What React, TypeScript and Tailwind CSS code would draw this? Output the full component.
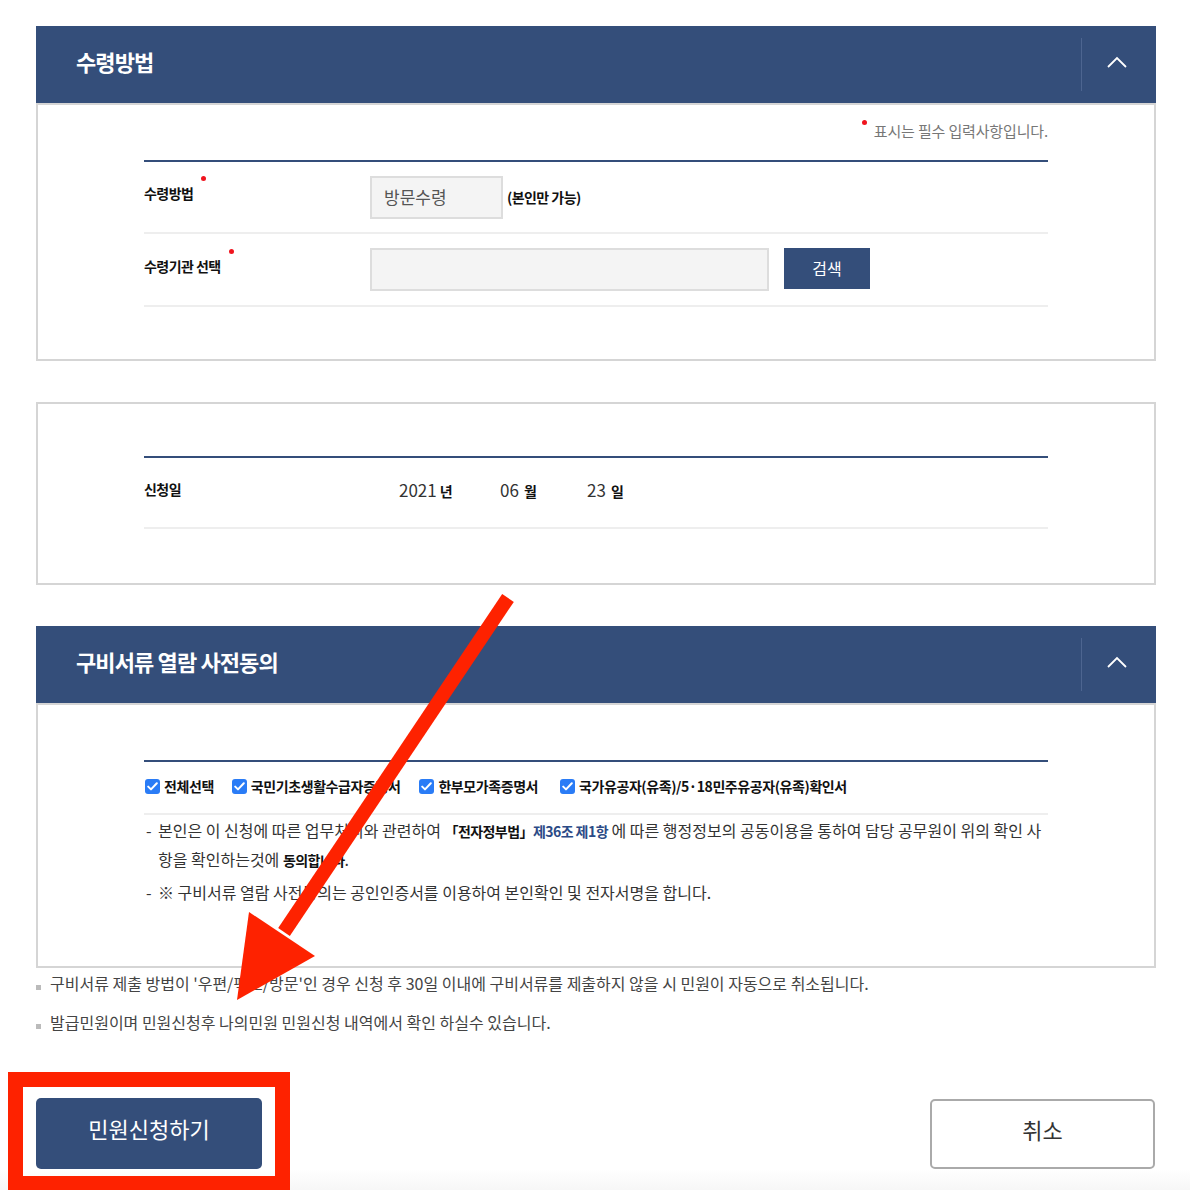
import React from "react";

const NAVY = "bg-[#344e7a]";

const Dot = () => (
  <span className="inline-block w-[5px] h-[5px] rounded-full bg-[#f0141e] mt-[-7px] ml-[8px] shrink-0" />
);

const SectionHeader: React.FC<{ title: string }> = ({ title }) => (
  <div className={`h-[77px] ${NAVY} flex items-center justify-between`}>
    <h2 className="pl-[40px] pb-[6px] text-[22px] font-bold text-white tracking-[-0.04em]">{title}</h2>
    <div className="w-[75px] h-[53px] border-l border-[#4d6590] flex items-center justify-center pr-[4px] pb-[6px]">
      <svg width="20" height="12" viewBox="0 0 20 12" fill="none">
        <path d="M1 11 L10 2 L19 11" stroke="#fff" strokeWidth="1.8" />
      </svg>
    </div>
  </div>
);

const Label: React.FC<{ text: string; required?: boolean }> = ({ text, required }) => (
  <div className="w-[226px] flex items-start text-[14px] font-bold text-[#111] tracking-[-0.04em] leading-[20px] pb-[8px]">
    {text}
    {required && <Dot />}
  </div>
);

const Check: React.FC<{ label: string }> = ({ label }) => (
  <label className="flex items-center gap-[4px]">
    <span className="w-[15px] h-[15px] rounded-[3px] bg-[#2a7cf6] flex items-center justify-center">
      <svg width="11" height="9" viewBox="0 0 11 9" fill="none">
        <path d="M1.2 4.6 L4 7.4 L9.8 1.2" stroke="#fff" strokeWidth="2" strokeLinecap="round" strokeLinejoin="round" />
      </svg>
    </span>
    <span className="text-[14px] font-bold text-[#111] tracking-[-0.03em]">{label}</span>
  </label>
);

export default function App() {
  return (
    <div className="relative w-[1190px] h-[1190px] overflow-hidden bg-white font-['Noto_Sans_CJK_KR',sans-serif]">
      <div className="ml-[36px] w-[1120px] pt-[26px]">
        {/* 수령방법 */}
        <SectionHeader title="수령방법" />
        <div className="border-2 border-[#d5d5d5] px-[106px] pt-[16px] pb-[52px]">
          <div className="flex justify-end items-start mb-[19px]">
            <span className="inline-block w-[5px] h-[5px] rounded-full bg-[#f0141e] mr-[7px] mt-[-1px]" />
            <span className="text-[15px] leading-[20px] text-[#777] tracking-[-0.01em]">표시는 필수 입력사항입니다.</span>
          </div>
          <div className="border-t-2 border-[#344e7a]">
            <div className="h-[72px] flex items-center border-b-2 border-[#eeeeee]">
              <Label text="수령방법" required />
              <div className="w-[133px] h-[43px] border-2 border-[#dddddd] bg-[#f4f4f4] flex items-center pl-[12px] text-[17px] text-[#555]">
                방문수령
              </div>
              <span className="ml-[4px] text-[14px] font-bold text-[#111] tracking-[-0.04em]">(본인만 가능)</span>
            </div>
            <div className="h-[73px] flex items-center border-b-2 border-[#eeeeee]">
              <Label text="수령기관 선택" required />
              <div className="w-[399px] h-[43px] border-2 border-[#dddddd] bg-[#f4f4f4]" />
              <button className={`ml-[15px] w-[86px] h-[41px] mb-[2px] pb-[2px] ${NAVY} text-white text-[16px]`}>검색</button>
            </div>
          </div>
        </div>

        {/* 신청일 */}
        <div className="mt-[41px] border-2 border-[#d5d5d5] px-[106px] pt-[52px] pb-[54px]">
          <div className="border-t-2 border-[#344e7a]">
            <div className="h-[71px] flex items-center pb-[6px] border-b-2 border-[#eeeeee]">
              <div className="w-[226px] text-[14px] font-bold text-[#111] tracking-[-0.04em]">신청일</div>
              <div className="flex items-center pl-[29px] text-[#333]">
                <span className="w-[101px]">
                  <span className="text-[17px]">2021</span>
                  <span className="ml-[3px] text-[14px] font-bold text-[#111]">년</span>
                </span>
                <span className="w-[87px]">
                  <span className="text-[17px]">06</span>
                  <span className="ml-[5px] text-[14px] font-bold text-[#111]">월</span>
                </span>
                <span>
                  <span className="text-[17px]">23</span>
                  <span className="ml-[5px] text-[14px] font-bold text-[#111]">일</span>
                </span>
              </div>
            </div>
          </div>
        </div>

        {/* 구비서류 열람 사전동의 */}
        <div className="mt-[41px]">
          <SectionHeader title="구비서류 열람 사전동의" />
          <div className="border-2 border-[#d5d5d5] px-[106px] pt-[55px] pb-[60px]">
            <div className="border-t-2 border-[#344e7a]">
              <div className="h-[53px] flex items-center pl-[1px] pb-[3px] border-b-2 border-[#eeeeee]">
                <Check label="전체선택" />
                <span className="w-[18px]" />
                <Check label="국민기초생활수급자증명서" />
                <span className="w-[19px]" />
                <Check label="한부모가족증명서" />
                <span className="w-[22px]" />
                <Check label="국가유공자(유족)/5·18민주유공자(유족)확인서" />
              </div>
              <div className="pt-[1px] text-[16px] leading-[28px] text-[#333]">
                <div className="flex">
                  <span className="w-[14px] shrink-0 pl-[2px]">-</span>
                  <p>
                    본인은 이 신청에 따른 업무처리와 관련하여 <b className="text-[14px] text-[#111] tracking-[-0.04em]">「전자정부법」</b>
                    <b className="text-[14px] text-[#2b4a86] tracking-[-0.04em]">제36조 제1항</b> 에 따른 행정정보의 공동이용을 통하여 담당 공무원이 위의 확인 사항을 확인하는것에{" "}
                    <b className="text-[14px] text-[#111] tracking-[-0.04em]">동의합니다</b>.
                  </p>
                </div>
                <div className="flex mt-[4px]">
                  <span className="w-[14px] shrink-0 pl-[2px]">-</span>
                  <p>※ 구비서류 열람 사전동의는 공인인증서를 이용하여 본인확인 및 전자서명을 합니다.</p>
                </div>
              </div>
            </div>
          </div>
        </div>

        {/* 안내 */}
        <ul className="mt-[5px] text-[16px] leading-[20px] text-[#444]">
          <li className="flex items-center gap-[9px]">
            <span className="w-[5px] h-[5px] bg-[#bbbbbb] mt-[8px]" />
            구비서류 제출 방법이 '우편/팩스/방문'인 경우 신청 후 30일 이내에 구비서류를 제출하지 않을 시 민원이 자동으로 취소됩니다.
          </li>
          <li className="flex items-center gap-[9px] mt-[19px]">
            <span className="w-[5px] h-[5px] bg-[#bbbbbb] mt-[8px]" />
            발급민원이며 민원신청후 나의민원 민원신청 내역에서 확인 하실수 있습니다.
          </li>
        </ul>

        <div className="mt-[66px] flex justify-between items-start">
          <button className={`w-[226px] h-[71px] pb-[10px] rounded-[5px] ${NAVY} text-white text-[22px]`}>민원신청하기</button>
          <button className="mr-[1px] mt-[1px] w-[225px] h-[70px] pb-[10px] rounded-[5px] border-2 border-[#aaaaaa] bg-white text-[22px] text-[#333]">
            취소
          </button>
        </div>
      </div>
      <div className="h-[30px] bg-gradient-to-b from-white to-[#f3f3f3]" />

      {/* annotation overlays */}
      <div className="absolute left-[8px] top-[1072px] w-[282px] h-[119px] border-[15px] border-[#fe2200]" />
      <svg className="absolute left-0 top-0 pointer-events-none" width="1190" height="1190">
        <line x1="508" y1="598" x2="284" y2="932" stroke="#fe2200" strokeWidth="14" />
        <polygon points="237,1000 249,912 315,956" fill="#fe2200" />
      </svg>
    </div>
  );
}
